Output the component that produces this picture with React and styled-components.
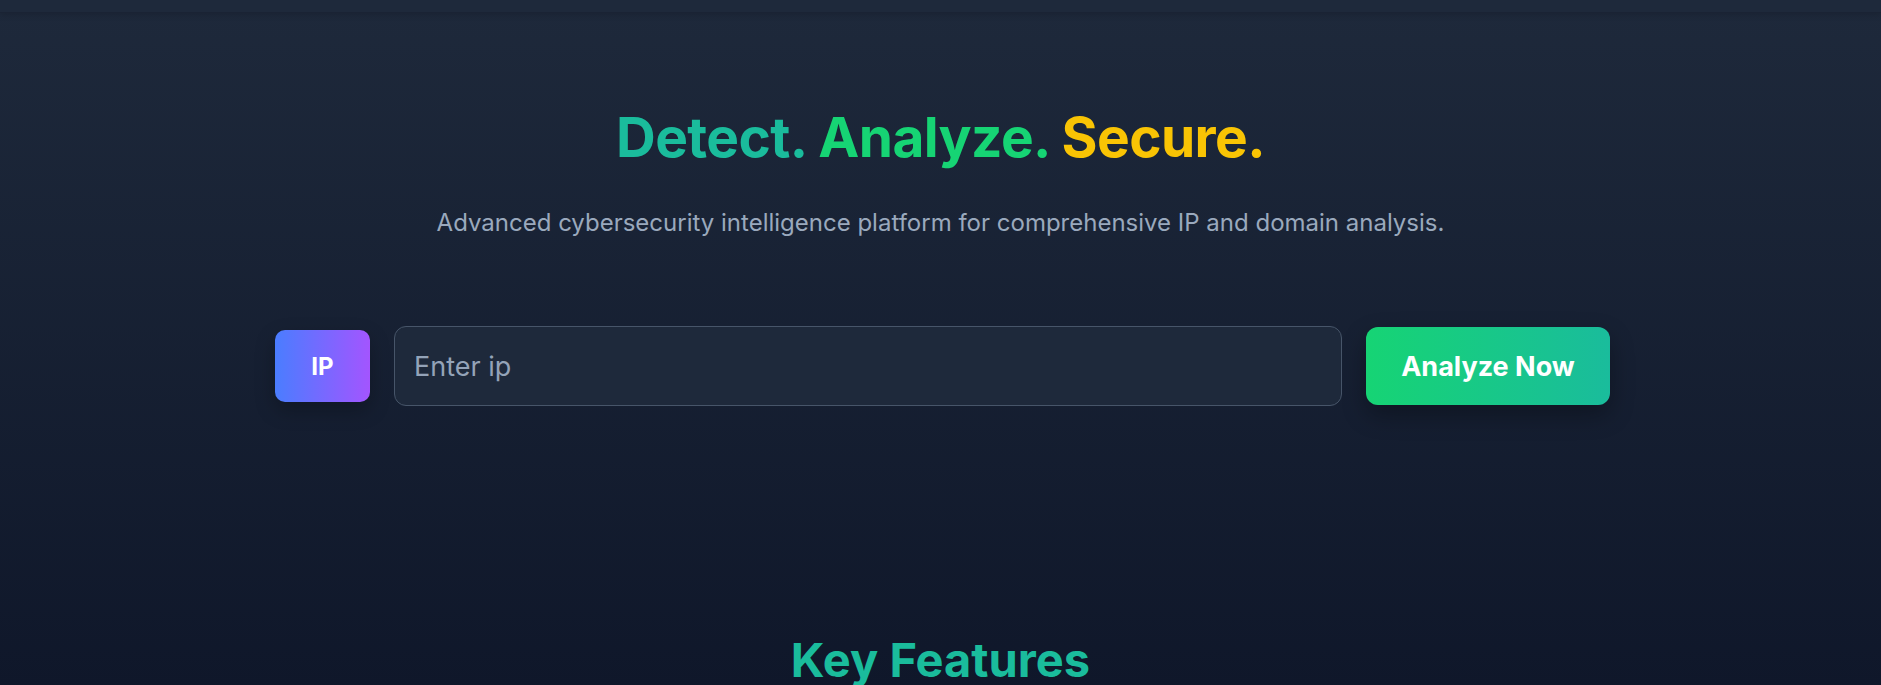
import React from 'react';
import styled, { createGlobalStyle } from 'styled-components';

const GlobalStyle = createGlobalStyle`
  * {
    box-sizing: border-box;
  }

  body {
    margin: 0;
    background: #0f172a;
    font-family: Inter, "Noto Sans", sans-serif;
    color: #e2e8f0;
  }
`;

const Page = styled.main`
  min-height: 100vh;
  background: linear-gradient(180deg, #1e293b 0%, #0f172a 100%);
  overflow: hidden;
`;

const TopBar = styled.div`
  height: 13px;
  background: #1e293b;
  border-bottom: 1px solid #1a2334;
  box-shadow: 0 2px 6px rgba(0, 0, 0, 0.15);
`;

const Hero = styled.section`
  display: flex;
  flex-direction: column;
  align-items: center;
  padding-top: 97px;
`;

const Title = styled.h1`
  margin: 0;
  font-size: 55px;
  line-height: 1;
  font-weight: 700;
  letter-spacing: -0.6px;
`;

const Word = styled.span`
  color: ${(p) => p.color};
`;

const Subtitle = styled.p`
  margin: 42px 0 0;
  font-size: 24px;
  line-height: 32px;
  color: #9aa9bd;
`;

const SearchRow = styled.div`
  display: flex;
  align-items: center;
  gap: 24px;
  margin-top: 87px;
  padding-left: 4px;
`;

const TypeBadge = styled.div`
  width: 95px;
  height: 72px;
  display: flex;
  align-items: center;
  justify-content: center;
  border-radius: 10px;
  background: linear-gradient(90deg, #4a7dff 0%, #a355ff 100%);
  color: #ffffff;
  font-weight: 700;
  font-size: 24px;
  box-shadow: 0 8px 20px rgba(0, 0, 0, 0.25);
`;

const SearchInput = styled.input`
  width: 948px;
  height: 80px;
  padding: 0 19px;
  border-radius: 12px;
  border: 1px solid #475569;
  background: #1e293b;
  color: #e2e8f0;
  font-family: inherit;
  font-size: 27px;
  outline: none;

  &::placeholder {
    color: #94a3b8;
  }
`;

const AnalyzeButton = styled.button`
  width: 244px;
  height: 78px;
  border: none;
  border-radius: 12px;
  background: linear-gradient(90deg, #16d474 0%, #1abc9c 100%);
  color: #ffffff;
  font-family: inherit;
  font-weight: 700;
  font-size: 27px;
  cursor: pointer;
  box-shadow: 0 10px 24px rgba(0, 0, 0, 0.3);
`;

const FeaturesHeading = styled.h2`
  margin: 226px 0 0;
  font-size: 47px;
  line-height: 56px;
  font-weight: 700;
  color: #1abc9c;
  text-align: center;
`;

const App = () => (
  <Page>
    <GlobalStyle />
    <TopBar />
    <Hero>
      <Title>
        <Word color="#1abc9c">Detect.</Word>{' '}
        <Word color="#16d474">Analyze.</Word>{' '}
        <Word color="#f9c404">Secure.</Word>
      </Title>
      <Subtitle>
        Advanced cybersecurity intelligence platform for comprehensive IP and domain analysis.
      </Subtitle>
      <SearchRow>
        <TypeBadge>IP</TypeBadge>
        <SearchInput placeholder="Enter ip" />
        <AnalyzeButton type="button">Analyze Now</AnalyzeButton>
      </SearchRow>
      <FeaturesHeading>Key Features</FeaturesHeading>
    </Hero>
  </Page>
);

export default App;
